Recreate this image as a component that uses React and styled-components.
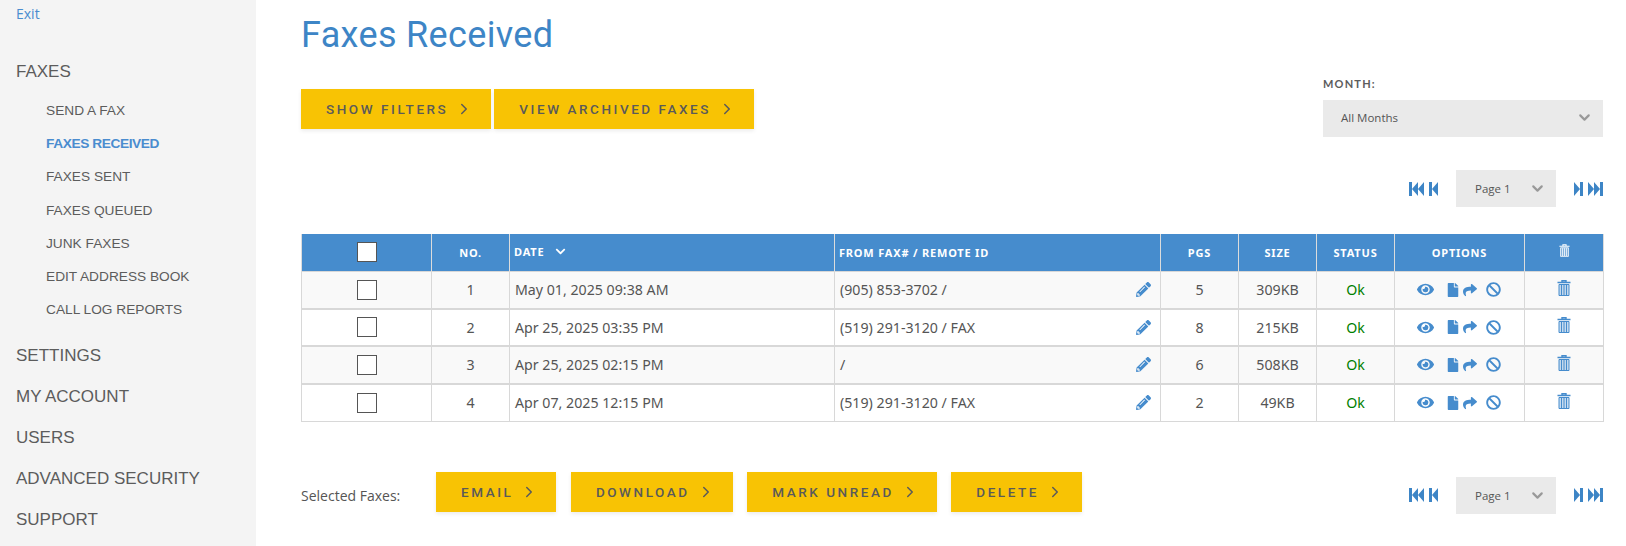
import React from 'react';
import styled, { createGlobalStyle } from 'styled-components';
import { FaEye, FaFile, FaShare, FaBan, FaPencilAlt, FaChevronDown } from 'react-icons/fa';
import { FiChevronRight, FiChevronDown } from 'react-icons/fi';

const faxes = [
  { no: 1, date: 'May 01, 2025 09:38 AM', from: '(905) 853-3702 /', pgs: 5, size: '309KB' },
  { no: 2, date: 'Apr 25, 2025 03:35 PM', from: '(519) 291-3120 / FAX', pgs: 8, size: '215KB' },
  { no: 3, date: 'Apr 25, 2025 02:15 PM', from: '/', pgs: 6, size: '508KB' },
  { no: 4, date: 'Apr 07, 2025 12:15 PM', from: '(519) 291-3120 / FAX', pgs: 2, size: '49KB' },
];

const subLinks = ['SEND A FAX', 'FAXES RECEIVED', 'FAXES SENT', 'FAXES QUEUED', 'JUNK FAXES', 'EDIT ADDRESS BOOK', 'CALL LOG REPORTS'];
const otherLinks = ['SETTINGS', 'MY ACCOUNT', 'USERS', 'ADVANCED SECURITY', 'SUPPORT'];
const colWidths = [130, 78, 325, 326, 78, 78, 78, 130, 79];

const TrashIcon = ({ size = 14 }) => (
  <svg width={size} height={size + 2} viewBox="0 0 14 16" fill="none" stroke="currentColor" strokeWidth="1">
    <path d="M0.5 2.5h13M5 2.5V0.7h4v1.8" strokeWidth="1.4" />
    <path d="M2 4.5h10v11H2z" fill="currentColor" fillOpacity="0.3" />
    <path d="M4.5 5v10M7 5v10M9.5 5v10" />
  </svg>
);

// the pager glyphs are a bar and triangles, flipped for the forward pair
const FastIcon = ({ $flip }) => (
  <PagerGlyph width="15" height="14" viewBox="0 0 15 14" $flip={$flip}>
    <path d="M0 0h3v14H0zM3 7l6-7v14zM9 7l6-7v14z" />
  </PagerGlyph>
);

const StepIcon = ({ $flip }) => (
  <PagerGlyph width="9" height="14" viewBox="0 0 9 14" $flip={$flip}>
    <path d="M0 0h3v14H0zM3 7l6-7v14z" />
  </PagerGlyph>
);

const Pager = () => (
  <PagerWrap>
    <PagerIcons>
      <FastIcon />
      <StepIcon />
    </PagerIcons>
    <PageSelect>
      Page 1
      <FiChevronDown size={17} strokeWidth={3} />
    </PageSelect>
    <PagerIcons>
      <StepIcon $flip />
      <FastIcon $flip />
    </PagerIcons>
  </PagerWrap>
);

const App = () => (
  <Page>
    <GlobalStyle />
    <Sidebar>
      <ExitLink>Exit</ExitLink>
      <MainLink $first>FAXES</MainLink>
      <SubList>
        {subLinks.map((l) => (
          <SubLink key={l} $active={l === 'FAXES RECEIVED'}>{l}</SubLink>
        ))}
      </SubList>
      {otherLinks.map((l) => (
        <MainLink key={l}>{l}</MainLink>
      ))}
    </Sidebar>
    <Main>
      <Title>Faxes Received</Title>
      <Toolbar>
        <ButtonGroup>
          <YellowButton>SHOW FILTERS <FiChevronRight size={18} /></YellowButton>
          <YellowButton>VIEW ARCHIVED FAXES <FiChevronRight size={18} /></YellowButton>
        </ButtonGroup>
        <MonthBox>
          <MonthLabel>MONTH:</MonthLabel>
          <MonthSelect>
            All Months
            <FiChevronDown size={17} strokeWidth={3} />
          </MonthSelect>
        </MonthBox>
      </Toolbar>
      <PagerRow><Pager /></PagerRow>
      <Table>
        <colgroup>
          {colWidths.map((w, i) => <Col key={i} $w={w} />)}
        </colgroup>
        <thead>
          <tr>
            <Th><CheckBox /></Th>
            <Th>NO.</Th>
            <Th $left>DATE <SortIcon><FaChevronDown size={11} /></SortIcon></Th>
            <Th $left>FROM FAX# / REMOTE ID</Th>
            <Th>PGS</Th>
            <Th>SIZE</Th>
            <Th>STATUS</Th>
            <Th>OPTIONS</Th>
            <Th><TrashIcon size={11} /></Th>
          </tr>
        </thead>
        <tbody>
          {faxes.map((f) => (
            <Row key={f.no}>
              <Td><CheckBox /></Td>
              <Td>{f.no}</Td>
              <Td $left>{f.date}</Td>
              <Td $left>
                <FromCell>
                  {f.from}
                  <Blue><FaPencilAlt size={15} /></Blue>
                </FromCell>
              </Td>
              <Td>{f.pgs}</Td>
              <Td>{f.size}</Td>
              <Td><Status>Ok</Status></Td>
              <Td>
                <Options>
                  <EyeIcon size={17} />
                  <FaFile size={14} />
                  <ShareIcon size={14} />
                  <FaBan size={15} />
                </Options>
              </Td>
              <Td><Blue><TrashIcon /></Blue></Td>
            </Row>
          ))}
        </tbody>
      </Table>
      <Footer>
        <SelectedLabel>Selected Faxes:</SelectedLabel>
        <FooterButtons>
          <YellowButton>EMAIL <FiChevronRight size={18} /></YellowButton>
          <YellowButton>DOWNLOAD <FiChevronRight size={18} /></YellowButton>
          <YellowButton>MARK UNREAD <FiChevronRight size={18} /></YellowButton>
          <YellowButton>DELETE <FiChevronRight size={18} /></YellowButton>
        </FooterButtons>
        <FooterPager><Pager /></FooterPager>
      </Footer>
    </Main>
  </Page>
);

const GlobalStyle = createGlobalStyle`
  html, body {
    margin: 0;
    padding: 0;
    background: #fff;
  }
`;

const Page = styled.div`
  display: flex;
  width: 1626px;
  height: 546px;
  overflow: hidden;
  font-family: 'Liberation Sans', sans-serif;
  color: #555;
`;

const Sidebar = styled.aside`
  width: 256px;
  flex-shrink: 0;
  box-sizing: border-box;
  background: #f4f4f4;
  padding: 5px 0 0 16px;
`;

const ExitLink = styled.div`
  font-family: 'Open Sans', sans-serif;
  font-size: 14px;
  line-height: 18px;
  color: #4a8ccf;
`;

const MainLink = styled.div`
  font-size: 17px;
  line-height: 41px;
  color: #5c5c5c;
  margin-top: ${(p) => (p.$first ? '28px' : '0')};
`;

const SubList = styled.div`
  padding: 2px 0 0 30px;
  margin: 0 0 9px;
`;

const SubLink = styled.div`
  font-size: 13.7px;
  line-height: 33.2px;
  font-weight: ${(p) => (p.$active ? 700 : 400)};
  letter-spacing: ${(p) => (p.$active ? '-0.4px' : '0')};
  color: ${(p) => (p.$active ? '#4a8ccf' : '#5c5c5c')};
`;

const Main = styled.main`
  flex: 1;
  min-width: 0;
  padding: 0 23px 0 45px;
`;

const Title = styled.h1`
  margin: 12px 0 0;
  font-family: 'Roboto', sans-serif;
  font-size: 36px;
  line-height: 46px;
  font-weight: 400;
  letter-spacing: 0.35px;
  color: #3d85c6;
`;

const Toolbar = styled.div`
  display: flex;
  justify-content: space-between;
  align-items: flex-start;
  margin-top: 14px;
`;

const ButtonGroup = styled.div`
  display: flex;
  gap: 3px;
  margin-top: 17px;
`;

const YellowButton = styled.button`
  display: inline-flex;
  align-items: center;
  justify-content: center;
  gap: 7px;
  height: 40px;
  padding: 0 18px 0 25px;
  border: 0;
  background: #f8c304;
  box-shadow: 0 2px 4px rgba(0, 0, 0, 0.08);
  color: #5a5a5a;
  font-family: 'Roboto', sans-serif;
  font-size: 13.5px;
  font-weight: 500;
  letter-spacing: 2.55px;
  white-space: nowrap;
`;

const MonthBox = styled.div`
  width: 280px;
`;

const MonthLabel = styled.div`
  font-family: 'Lato', sans-serif;
  font-size: 11px;
  line-height: 14px;
  font-weight: 700;
  letter-spacing: 1.2px;
  color: #5c5c5c;
  margin: 5px 0 9px;
`;

const MonthSelect = styled.div`
  display: flex;
  align-items: center;
  justify-content: space-between;
  height: 37px;
  padding: 0 10px 2px 18px;
  box-sizing: border-box;
  background: #eaeaea;
  font-family: 'Open Sans', sans-serif;
  font-size: 11.5px;
  color: #555;
  svg { color: #999; }
`;

const PagerRow = styled.div`
  display: flex;
  justify-content: flex-end;
  margin-top: 33px;
`;

const PagerWrap = styled.div`
  display: flex;
  align-items: center;
  gap: 18px;
`;

const PagerIcons = styled.div`
  display: flex;
  align-items: center;
  gap: 5px;
  color: #3d85c6;
`;

const PagerGlyph = styled.svg`
  fill: currentColor;
  transform: ${(p) => (p.$flip ? 'scaleX(-1)' : 'none')};
`;

const PageSelect = styled.div`
  display: flex;
  align-items: center;
  justify-content: space-between;
  width: 100px;
  height: 37px;
  padding: 0 10px 0 19px;
  box-sizing: border-box;
  background: #eaeaea;
  font-family: 'Open Sans', sans-serif;
  font-size: 11.5px;
  color: #555;
  svg { color: #999; }
`;

const Table = styled.table`
  width: 1302px;
  margin-top: 27px;
  table-layout: fixed;
  border-collapse: collapse;
  font-family: 'Noto Sans', sans-serif;
  font-size: 14.2px;
  color: #555;
`;

const Col = styled.col`
  width: ${(p) => p.$w}px;
`;

const Th = styled.th`
  height: 37px;
  padding: 0 4px;
  box-sizing: border-box;
  background: #468ccd;
  border: 1px solid #dcdcdc;
  border-width: 0 1px;
  color: #fff;
  font-size: 11px;
  font-weight: 700;
  letter-spacing: 0.8px;
  text-align: ${(p) => (p.$left ? 'left' : 'center')};
`;

const SortIcon = styled.span`
  margin-left: 7px;
  vertical-align: -1px;
`;

const Row = styled.tr`
  &:nth-child(odd) td {
    background: #f9f9f9;
  }
`;

const Td = styled.td`
  height: 37.6px;
  padding: 0 ${(p) => (p.$left ? '5px' : '4px')};
  box-sizing: border-box;
  border: 1px solid #d8d8d8;
  border-bottom-width: 2px;
  text-align: ${(p) => (p.$left ? 'left' : 'center')};
  tr:last-child & {
    border-bottom-width: 1px;
  }
`;

const FromCell = styled.div`
  display: flex;
  justify-content: space-between;
  align-items: center;
  padding-right: 4px;
`;

const Blue = styled.span`
  display: inline-flex;
  color: #468ccd;
`;

const Status = styled.span`
  color: #008000;
`;

const Options = styled.div`
  display: flex;
  justify-content: center;
  align-items: center;
  gap: 3px;
  padding-right: 2px;
  color: #468ccd;
`;

const EyeIcon = styled(FaEye)`
  margin-right: 9px;
`;

const ShareIcon = styled(FaShare)`
  margin-right: 6px;
`;

const CheckBox = styled.span`
  display: block;
  width: 20px;
  height: 20px;
  margin: 0 auto;
  box-sizing: border-box;
  background: #fff;
  border: 1px solid #555;
`;

const Footer = styled.div`
  display: flex;
  align-items: flex-start;
  margin-top: 50px;
`;

const SelectedLabel = styled.div`
  width: 135px;
  margin-top: 14px;
  font-family: 'Open Sans', sans-serif;
  font-size: 14px;
  line-height: 20px;
  color: #555;
`;

const FooterButtons = styled.div`
  display: flex;
  gap: 14.5px;
  flex: 1;
`;

const FooterPager = styled.div`
  margin-top: 5px;
`;

export default App;
